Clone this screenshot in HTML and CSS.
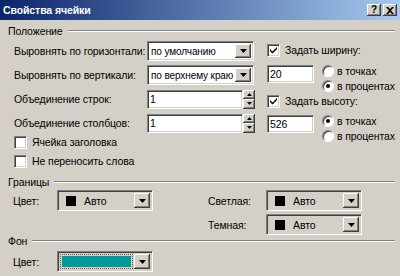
FILE: index.html
```html
<!DOCTYPE html>
<html lang="ru">
<head>
    <meta charset="UTF-8">
    <title>Свойства ячейки</title>
    <link rel="stylesheet" href="styles.css">
</head>
<body>
    <div class="dialog">
        <div class="titlebar">
            <span class="title">Свойства ячейки</span>
            <div class="title-buttons">
                <span class="tbtn help">?</span>
                <span class="tbtn">
                    <svg width="8" height="7" viewBox="0 0 8 7"><path d="M0 0h2l2 2 2-2h2L5 3.5 8 7H6L4 5 2 7H0l3-3.5z" fill="#000"/></svg>
                </span>
            </div>
        </div>

        <div class="content">
            <!-- Положение -->
            <div class="group-title"><span>Положение</span></div>
            <div class="position">
                <div class="pos-left">
                    <div class="rows">
                        <div class="row">
                            <span class="label">Выровнять по горизонтали:</span>
                            <div class="select"><span class="value">по умолчанию</span><span class="drop"><svg width="7" height="4"><path d="M0 0h7L3.5 4z" fill="#000"/></svg></span></div>
                        </div>
                        <div class="row">
                            <span class="label">Выровнять по вертикали:</span>
                            <div class="select"><span class="value">по верхнему краю</span><span class="drop"><svg width="7" height="4"><path d="M0 0h7L3.5 4z" fill="#000"/></svg></span></div>
                        </div>
                        <div class="row">
                            <span class="label">Объединение строк:</span>
                            <div class="spin">
                                <div class="field"><span class="value">1</span></div>
                                <div class="spin-btns">
                                    <span class="sbtn"><svg width="5" height="3"><path d="M0 3h5L2.5 0z" fill="#000"/></svg></span>
                                    <span class="sbtn"><svg width="5" height="3"><path d="M0 0h5L2.5 3z" fill="#000"/></svg></span>
                                </div>
                            </div>
                        </div>
                        <div class="row">
                            <span class="label">Объединение столбцов:</span>
                            <div class="spin">
                                <div class="field"><span class="value">1</span></div>
                                <div class="spin-btns">
                                    <span class="sbtn"><svg width="5" height="3"><path d="M0 3h5L2.5 0z" fill="#000"/></svg></span>
                                    <span class="sbtn"><svg width="5" height="3"><path d="M0 0h5L2.5 3z" fill="#000"/></svg></span>
                                </div>
                            </div>
                        </div>
                    </div>
                    <div class="checks">
                        <div class="check"><span class="box"></span>Ячейка заголовка</div>
                        <div class="check"><span class="box"></span>Не переносить слова</div>
                    </div>
                </div>

                <div class="pos-right">
                    <div class="check"><span class="box"><svg width="7" height="7"><path d="M0 2l2.5 2.5L7 0v2L2.5 6.5 0 4z" fill="#000"/></svg></span>Задать ширину:</div>
                    <div class="size-row">
                        <div class="field small"><span class="value">20</span></div>
                        <div class="radios">
                            <div class="radio"><span class="dot"></span>в точках</div>
                            <div class="radio"><span class="dot on"></span>в процентах</div>
                        </div>
                    </div>
                    <div class="check"><span class="box"><svg width="7" height="7"><path d="M0 2l2.5 2.5L7 0v2L2.5 6.5 0 4z" fill="#000"/></svg></span>Задать высоту:</div>
                    <div class="size-row second">
                        <div class="field small"><span class="value">526</span></div>
                        <div class="radios">
                            <div class="radio"><span class="dot on"></span>в точках</div>
                            <div class="radio"><span class="dot"></span>в процентах</div>
                        </div>
                    </div>
                </div>
            </div>

            <!-- Границы -->
            <div class="group-title borders-title"><span>Границы</span></div>
            <div class="borders">
                <div class="color-row">
                    <span class="clabel">Цвет:</span>
                    <div class="combo"><span class="swatch"></span><span class="cvalue">Авто</span><span class="drop"><svg width="7" height="4"><path d="M0 0h7L3.5 4z" fill="#000"/></svg></span></div>
                </div>
                <div class="border-right">
                    <div class="color-row">
                        <span class="clabel wide">Светлая:</span>
                        <div class="combo"><span class="swatch"></span><span class="cvalue">Авто</span><span class="drop"><svg width="7" height="4"><path d="M0 0h7L3.5 4z" fill="#000"/></svg></span></div>
                    </div>
                    <div class="color-row">
                        <span class="clabel wide">Темная:</span>
                        <div class="combo"><span class="swatch"></span><span class="cvalue">Авто</span><span class="drop"><svg width="7" height="4"><path d="M0 0h7L3.5 4z" fill="#000"/></svg></span></div>
                    </div>
                </div>
            </div>

            <!-- Фон -->
            <div class="group-title bg-title"><span>Фон</span></div>
            <div class="color-row">
                <span class="clabel">Цвет:</span>
                <div class="combo"><span class="teal"></span><span class="drop"><svg width="7" height="4"><path d="M0 0h7L3.5 4z" fill="#000"/></svg></span></div>
            </div>
        </div>
    </div>
</body>
</html>
```

FILE: styles.css
```css
body {
    margin: 0;
    font-family: "Liberation Sans", Arial, sans-serif;
    font-size: 10.5px;
    letter-spacing: -0.1px;
    color: #000;
    background: #d4d0c8;
}
.dialog {
    width: 400px;
    height: 276px;
    background: #d4d0c8;
    overflow: hidden;
}
.titlebar {
    height: 20px;
    display: flex;
    align-items: center;
    justify-content: space-between;
    padding: 0 3px;
    background: linear-gradient(to right, #0a246a, #a6caf0);
}
.title {
    color: #fff;
    font-weight: bold;
    font-size: 10.5px;
}
.title-buttons {
    display: flex;
    gap: 2px;
}
.tbtn {
    width: 14px;
    height: 12px;
    display: flex;
    align-items: center;
    justify-content: center;
    background: #d4d0c8;
    box-shadow: inset -1px -1px #404040, inset 1px 1px #fff, inset -2px -2px #808080;
    font-weight: bold;
    font-size: 10px;
    line-height: 12px;
}
.content {
    padding: 5px 5px 0 8px;
}
.group-title {
    display: flex;
    align-items: center;
    height: 12px;
    line-height: 12px;
}
.group-title::after {
    content: "";
    flex: 1;
    margin-left: 5px;
    height: 0;
    border-top: 1px solid #808080;
    border-bottom: 1px solid #fff;
}
.position {
    display: flex;
    margin-top: 4px;
}
.pos-left {
    width: 252px;
    padding-left: 6px;
}
.rows {
    display: flex;
    flex-direction: column;
    gap: 4px;
}
.row {
    display: flex;
    align-items: center;
    height: 20px;
}
.label {
    width: 133px;
    white-space: nowrap;
}
.select, .field, .combo {
    box-sizing: border-box;
    border: 1px solid;
    border-color: #808080 #fff #fff #808080;
    box-shadow: inset 1px 1px #404040, inset -1px -1px #d4d0c8;
}
.select {
    width: 107px;
    height: 20px;
    display: flex;
    align-items: center;
    background: #fff;
    padding: 2px;
}
.value {
    flex: 1;
    padding-left: 1px;
    white-space: nowrap;
    overflow: hidden;
}
.select .value {
    font-size: 10px;
}
.drop {
    width: 16px;
    height: 100%;
    display: flex;
    align-items: center;
    justify-content: center;
    background: #d4d0c8;
    box-sizing: border-box;
    box-shadow: inset -1px -1px #404040, inset 1px 1px #fff, inset -2px -2px #808080;
}
.spin {
    display: flex;
    height: 19px;
}
.field {
    width: 96px;
    height: 19px;
    display: flex;
    align-items: center;
    background: #fff;
    padding: 0 1px;
}
.spin-btns {
    width: 12px;
    display: flex;
    flex-direction: column;
}
.sbtn {
    flex: 1;
    display: flex;
    align-items: center;
    justify-content: center;
    background: #d4d0c8;
    box-shadow: inset -1px -1px #404040, inset 1px 1px #fff, inset -2px -2px #808080;
}
.checks {
    display: flex;
    flex-direction: column;
    gap: 3px;
    margin-top: 1px;
}
.check {
    display: flex;
    align-items: center;
    height: 16px;
    white-space: nowrap;
}
.box {
    width: 13px;
    height: 13px;
    box-sizing: border-box;
    margin-right: 5px;
    display: flex;
    align-items: center;
    justify-content: center;
    background: #fff;
    border: 1px solid;
    border-color: #808080 #fff #fff #808080;
    box-shadow: inset 1px 1px #404040, inset -1px -1px #d4d0c8;
}
.pos-right {
    padding-left: 6px;
    padding-top: 1px;
}
.size-row {
    display: flex;
    height: 28px;
    margin-top: 7px;
}
.size-row.second {
    margin-top: 6px;
}
.field.small {
    width: 47px;
    height: 18px;
    margin-right: 8px;
}
.radios {
    display: flex;
    flex-direction: column;
    margin-top: -1px;
}
.radio {
    display: flex;
    align-items: center;
    height: 16px;
    white-space: nowrap;
}
.dot {
    width: 12px;
    height: 12px;
    box-sizing: border-box;
    margin-right: 3px;
    border-radius: 50%;
    background: #fff;
    border: 1px solid;
    border-color: #808080 #fff #fff #808080;
    box-shadow: inset 1px 1px #404040;
    display: flex;
    align-items: center;
    justify-content: center;
}
.dot.on::after {
    content: "";
    width: 4px;
    height: 4px;
    border-radius: 50%;
    background: #000;
}
.borders-title {
    margin-top: 7px;
}
.borders {
    display: flex;
    align-items: flex-start;
    margin-top: 2px;
}
.border-right {
    display: flex;
    flex-direction: column;
    gap: 3px;
    margin-left: 55px;
}
.color-row {
    display: flex;
    align-items: center;
    padding-left: 5px;
}
.border-right .color-row {
    padding-left: 0;
}
.clabel {
    width: 44px;
}
.clabel.wide {
    width: 58px;
}
.combo {
    width: 96px;
    height: 21px;
    display: flex;
    align-items: center;
    padding: 2px;
    background: #d4d0c8;
}
.swatch {
    width: 10px;
    height: 10px;
    margin-left: 6px;
    background: #000;
}
.cvalue {
    flex: 1;
    margin-left: 8px;
}
.bg-title {
    margin-top: 0;
}
.bg-title + .color-row {
    margin-top: 4px;
}
.teal {
    flex: 1;
    height: 11px;
    margin: 0 3px 0 2px;
    background: #009a9a;
    outline: 1px dotted #8a4848;
    outline-offset: 1px;
}
```
